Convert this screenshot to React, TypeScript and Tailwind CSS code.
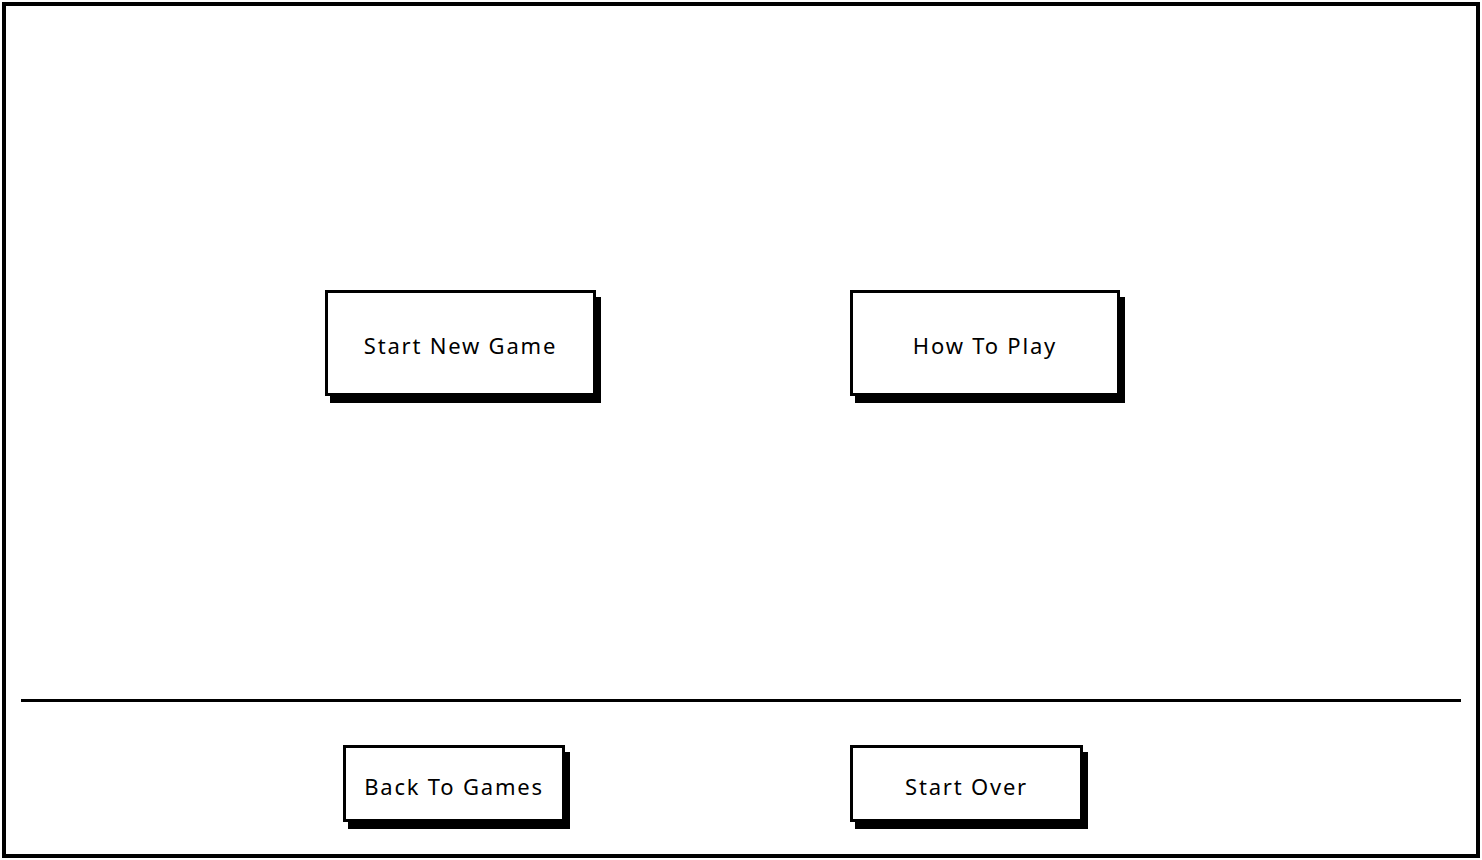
import React from "react";

const FONT = "font-['Noto_Sans',_'DejaVu_Sans',_sans-serif]";

function SketchButton({
  label,
  className,
}: {
  label: string;
  className?: string;
}) {
  return (
    <button
      className={`flex items-center justify-center border-[3px] border-black bg-white pt-[5px] text-[22px] tracking-[1.8px] text-black shadow-[5px_7px_0_#000] ${className ?? ""}`}
    >
      {label}
    </button>
  );
}

export default function App() {
  return (
    <div className={`h-[860px] w-[1482px] bg-white p-[2px] ${FONT}`}>
      <div className="flex h-[856px] w-[1478px] flex-col border-[4px] border-black bg-white">
        {/* MAIN MENU */}
        <div className="flex h-[693px] items-start gap-[254px] pl-[319px] pt-[284px]">
          <SketchButton label="Start New Game" className="h-[106px] w-[271px]" />
          <SketchButton label="How To Play" className="h-[106px] w-[270px]" />
        </div>

        <div className="mx-[15px] h-[3px] bg-black" />

        {/* FOOTER */}
        <div className="flex items-start gap-[285px] pl-[337px] pt-[43px]">
          <SketchButton label="Back To Games" className="h-[77px] w-[222px]" />
          <SketchButton label="Start Over" className="h-[77px] w-[233px]" />
        </div>
      </div>
    </div>
  );
}
